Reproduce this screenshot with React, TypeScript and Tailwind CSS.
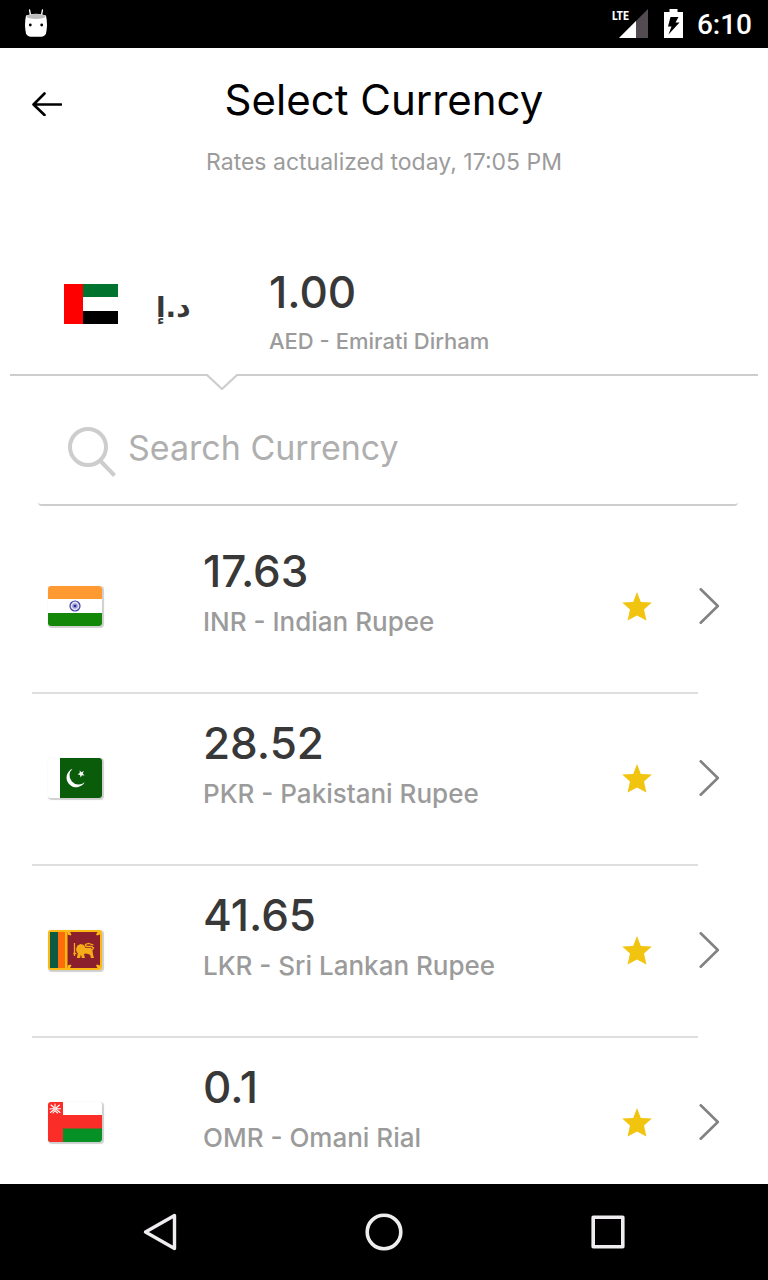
import { useState, type ReactNode } from "react";

const IndiaFlag = () => (
  <svg viewBox="0 0 54 40" className="block h-full w-full" role="img" aria-label="India">
    <rect width="54" height="40" fill="#fff" />
    <rect width="54" height="13" fill="#ff9a33" />
    <rect y="27" width="54" height="13" fill="#138808" />
    <circle cx="27" cy="20" r="5" fill="#e4e4f6" stroke="#3d3da6" strokeWidth="1.2" />
    <circle cx="27" cy="20" r="2.8" fill="#9b9bd6" />
    <circle cx="27" cy="20" r="1.3" fill="#2b2b99" />
  </svg>
);

const PakistanFlag = () => (
  <svg viewBox="0 0 54 40" className="block h-full w-full" role="img" aria-label="Pakistan">
    <rect width="54" height="40" fill="#fff" />
    <rect x="12" width="42" height="40" fill="#0a5c0a" />
    <path d="M24.5 10.8A9.6 9.6 0 1 0 36.6 24.2A8.6 8.6 0 1 1 24.5 10.8Z" fill="#fff" />
    <path d="M31.6 12.6l1.9 1.7 2.3-1.2-1 2.4 1.7 1.9-2.5-.2-1.3 2.2-.6-2.5-2.5-.6 2.2-1.3z" fill="#fff" />
  </svg>
);

const SriLankaFlag = () => (
  <svg viewBox="0 0 54 40" className="block h-full w-full" role="img" aria-label="Sri Lanka">
    <rect width="54" height="40" fill="#fdb913" />
    <rect x="2" y="2" width="8" height="36" fill="#0b5a44" />
    <rect x="10" y="2" width="7" height="36" fill="#ff6a0a" />
    <rect x="19.5" y="2" width="32.5" height="36" fill="#8b1f2b" />
    <path d="M19.5 2h2.5l1.500 2.500-1 1-3-1zM52 2h-2.500l-1.500 2.500 1 1 3-1zM19.500 38h2.500l1.500-2.500-1-1-3 1zM52 38h-2.500l-1.500-2.500 1-1 3 1z" fill="#fdb913" />
    <path d="M26.500 13v13M25.300 23.500h3" stroke="#f6ac18" strokeWidth="1.300" fill="none" />
    <path d="M28 19l1.500-3.500 3-1.500 3.500 1 1.500 3h5.500l1.500 2.500.5 4 1 3.500h-3.200l-.3-2.500-2-1.500-3.500-.5-1 1 1 3.500h-3.200l-.8-3.500-1 3.500h-3.200l1-4.500-1.300-2z" fill="#f6ac18" />
    <path d="M44 20l1.500-2-2-1.500h-5.500l-.5-2 3-1 5 1.500" stroke="#f6ac18" strokeWidth="1.300" fill="none" />
  </svg>
);

const OmanFlag = () => (
  <svg viewBox="0 0 54 40" className="block h-full w-full" role="img" aria-label="Oman">
    <rect width="54" height="40" fill="#fff" />
    <rect y="13" width="54" height="14" fill="#fb2d28" />
    <rect y="26.5" width="54" height="13.5" fill="#069127" />
    <rect width="15" height="40" fill="#fb2d28" />
    <g stroke="#fff" strokeWidth="1.1" fill="none" strokeLinecap="round">
      <path d="M2.500 10.500L11.500 3M3 3l9 7.500M7 2v3.500M1.800 7l4-.5M8.500 6.500l4 .3M5 11l2-2.500 2.500 2.500" />
    </g>
    <circle cx="7.2" cy="6.6" r="1.5" fill="#ffd9d6" />
  </svg>
);

const UaeFlag = () => (
  <svg viewBox="0 0 54 40" className="block h-10 w-[54px]" role="img" aria-label="United Arab Emirates">
    <rect width="54" height="40" fill="#fff" />
    <rect width="54" height="13" fill="#00732f" />
    <rect y="27" width="54" height="13" fill="#000" />
    <rect width="19" height="40" fill="#f00" />
  </svg>
);

type Currency = { code: string; name: string; rate: string; flag: ReactNode };

const currencies: Currency[] = [
  { code: "INR", name: "Indian Rupee", rate: "17.63", flag: <IndiaFlag /> },
  { code: "PKR", name: "Pakistani Rupee", rate: "28.52", flag: <PakistanFlag /> },
  { code: "LKR", name: "Sri Lankan Rupee", rate: "41.65", flag: <SriLankaFlag /> },
  { code: "OMR", name: "Omani Rial", rate: "0.1", flag: <OmanFlag /> },
];

function StatusBar() {
  return (
    <div className="flex h-12 shrink-0 items-center justify-between bg-black pr-4 pb-0.5 pl-6">
      <svg viewBox="0 0 24 28" className="h-7 w-6" aria-hidden="true">
        <path d="M5.500 1l1 5M18.500 1l-1 5" stroke="#fff" strokeWidth="1.300" strokeLinecap="round" />
        <path d="M2 6.500Q12 3 22 6.500Q24 16 22 24.500Q21 27.500 17 27.800H7Q3 27.500 2 24.500Q0 16 2 6.500Z" fill="#fff" />
        <ellipse cx="12" cy="7.500" rx="9.500" ry="2.500" fill="#bdbdbd" />
        <circle cx="6.300" cy="16" r="1.400" fill="#000" />
        <circle cx="17.700" cy="16" r="1.400" fill="#000" />
      </svg>
      <div className="flex items-center">
        <div className="relative h-[29px] w-9">
          <svg viewBox="0 0 36 29" className="h-full w-full" aria-hidden="true">
            <path d="M7 29L36 0V29Z" fill="#524c52" />
            <path d="M7 29L24 12V29Z" fill="#fff" />
          </svg>
          <span className="absolute top-0 left-0 font-['Roboto_Condensed','Open_Sans_Condensed','Liberation_Sans_Narrow','Roboto',sans-serif] text-[12px] leading-[14px] font-bold text-white">
            LTE
          </span>
        </div>
        <svg viewBox="0 0 19 29" className="ml-4 h-[29px] w-[19px]" aria-hidden="true">
          <path d="M5.500 0h8v3H19v26H0V3h5.500z" fill="#fff" />
          <path d="M6.500 8h8l-3 5.500h4L4.500 25.500l3-8H4z" fill="#000" />
        </svg>
        <span className="mt-1 ml-[14px] font-['Roboto'] text-[28px] leading-8 font-medium text-white">6:10</span>
      </div>
    </div>
  );
}

function Header() {
  return (
    <header className="grid grid-cols-[64px_1fr_64px] pt-6">
      <button type="button" aria-label="Back" className="mt-4 flex h-8 items-center pl-8">
        <svg viewBox="0 0 30 24" className="h-6 w-[30px] shrink-0" fill="none" stroke="#000" strokeWidth="2.600" strokeLinecap="round" strokeLinejoin="round" aria-hidden="true">
          <path d="M29 12.500H1.500M12.500 1.500L1.500 12.500L12.500 23" />
        </svg>
      </button>
      <div className="text-center">
        <h1 className="text-[42px] leading-[56px] text-black">Select Currency</h1>
        <p className="mt-[18px] text-[23px] leading-8 text-[#9b9b9b]">Rates actualized today, 17:05 PM</p>
      </div>
    </header>
  );
}

function SelectedCurrency() {
  return (
    <section className="mt-[90px]" aria-label="Selected currency">
      <div className="flex pl-16">
        <div className="mt-4">
          <UaeFlag />
        </div>
        <div className="mt-5 ml-[38px] w-[113px]">
          <bdi dir="rtl" lang="ar" className="font-['DejaVu_Sans',sans-serif] text-[28px] leading-10 font-bold text-[#383838]">
            د.إ
          </bdi>
        </div>
        <div>
          <div className="text-[44px] leading-[48px] font-medium text-[#383838]">1.00</div>
          <div className="mt-[9px] text-[22px] leading-8 font-medium text-[#9b9b9b]">AED - Emirati Dirham</div>
        </div>
      </div>
      <div className="mx-[10px] mt-[17px] flex h-4 items-start" aria-hidden="true">
        <span className="h-0.5 w-[196px] bg-[#cdcdcd]" />
        <svg viewBox="0 0 32 16" className="h-4 w-8" fill="none" stroke="#cdcdcd" strokeWidth="2.200">
          <path d="M0 1H1L16 15L31 1H32" />
        </svg>
        <span className="h-0.5 flex-1 bg-[#cdcdcd]" />
      </div>
    </section>
  );
}

function Search({ value, onChange }: { value: string; onChange: (v: string) => void }) {
  return (
    <div className="mr-[30px] ml-[38px] flex h-[116px] items-start rounded-[4px] border-b-2 border-[#cdcdcd] pt-8 pl-[30px]">
      <svg viewBox="0 0 48 50" className="mt-[5px] h-[50px] w-12 shrink-0" fill="none" stroke="#cdcdcd" strokeWidth="4" aria-hidden="true">
        <circle cx="20" cy="20" r="18" />
        <path d="M32.500 34L46.500 48.500" />
      </svg>
      <input
        type="text"
        aria-label="Search Currency"
        placeholder="Search Currency"
        value={value}
        onChange={(e) => onChange(e.target.value)}
        className="ml-3 h-[50px] min-w-0 flex-1 bg-transparent text-[34px] text-[#383838] outline-none placeholder:text-[#afafaf]"
      />
    </div>
  );
}

function CurrencyRow({ currency }: { currency: Currency }) {
  const [favorite, setFavorite] = useState(true);
  return (
    <li>
      <div className="flex h-[170px] items-center pr-12 pb-0.5 pl-12">
        <div className="h-10 w-[54px] shrink-0 overflow-hidden rounded-[3px] shadow-[1px_1px_1px_1px_#cfcfcf]">{currency.flag}</div>
        <div className="ml-[101px] min-w-0 flex-1 pb-[25px]">
          <div className="text-[44px] leading-[48px] font-medium text-[#383838]">{currency.rate}</div>
          <div className="mt-[9px] text-[26px] leading-9 font-medium text-[#9b9b9b]">
            {currency.code} - {currency.name}
          </div>
        </div>
        <button type="button" aria-label={`Favorite ${currency.code}`} aria-pressed={favorite} onClick={() => setFavorite(!favorite)}>
          <svg viewBox="0 0 30 29" className="block h-[29px] w-[30px]" aria-hidden="true">
            <path d="M15 0L18.800 10L29.800 10.600L22 17.600L24.400 28.500L15 23.500L5.600 28.500L8 17.600L0.200 10.600L11.200 10Z" fill={favorite ? "#f1c40f" : "#cdcdcd"} />
          </svg>
        </button>
        <button type="button" aria-label={`Select ${currency.name}`} className="ml-[47px]">
          <svg viewBox="0 0 21 36" className="block h-9 w-[21px]" fill="none" stroke="#828282" strokeWidth="2.600" strokeLinecap="round" strokeLinejoin="round" aria-hidden="true">
            <path d="M1.700 1.300L18.800 18L1.700 34.700" />
          </svg>
        </button>
      </div>
      <div className="mr-[70px] ml-8 h-0.5 bg-[#dedede]" />
    </li>
  );
}

function NavigationBar() {
  return (
    <nav className="flex h-24 shrink-0 items-center justify-between bg-black px-[136px]" aria-label="System">
      <button type="button" aria-label="Back">
        <svg viewBox="0 0 48 48" className="block size-12" fill="none" stroke="#efedef" strokeWidth="3.400" strokeLinejoin="round" aria-hidden="true">
          <path d="M38.500 7.500V40.500L9.500 24Z" />
        </svg>
      </button>
      <button type="button" aria-label="Home">
        <svg viewBox="0 0 48 48" className="block size-12" fill="none" stroke="#efedef" strokeWidth="3.600" aria-hidden="true">
          <circle cx="24" cy="24" r="16.800" />
        </svg>
      </button>
      <button type="button" aria-label="Recent apps">
        <svg viewBox="0 0 48 48" className="block size-12" fill="none" stroke="#efedef" strokeWidth="3.600" strokeLinejoin="round" aria-hidden="true">
          <rect x="9.200" y="9.200" width="29.600" height="29.600" />
        </svg>
      </button>
    </nav>
  );
}

export default function App() {
  const [query, setQuery] = useState("");
  const visible = currencies.filter((c) => `${c.code} ${c.name}`.toLowerCase().includes(query.toLowerCase()));
  return (
    <div className="flex h-screen flex-col bg-white font-['Inter','Noto_Sans',sans-serif]">
      <StatusBar />
      <main className="min-h-0 flex-1 overflow-y-auto [scrollbar-width:none]">
        <Header />
        <SelectedCurrency />
        <Search value={query} onChange={setQuery} />
        <ul className="mt-4">
          {visible.map((c) => (
            <CurrencyRow key={c.code} currency={c} />
          ))}
        </ul>
      </main>
      <NavigationBar />
    </div>
  );
}
